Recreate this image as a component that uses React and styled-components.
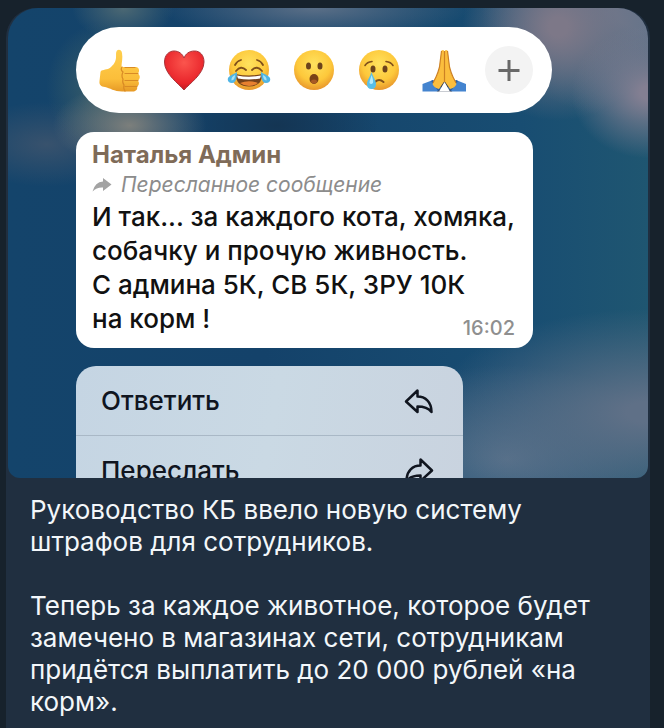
import React from 'react'
import styled, { createGlobalStyle } from 'styled-components'

function ThumbsUp () {
  return (
    <svg viewBox='0 0 48 48'>
      <defs>
        <linearGradient id='thumb' x1='0' y1='0' x2='0' y2='1'>
          <stop offset='0' stopColor='#ffcf4d' />
          <stop offset='0.7' stopColor='#fbbe3a' />
          <stop offset='1' stopColor='#e79a26' />
        </linearGradient>
      </defs>
      <path fill='url(#thumb)' d='M5.500 26C6 23.500 11 24 14 22.500C17 20.500 20.500 17 21 12C21.300 9 20.500 6 22 4.500C24 3 26.500 4 27 7C28 12 26.500 17 26.500 21H41C44.500 21 45 26.500 42.500 27.500C45.500 28.500 45.500 33.500 42.500 34.500C44.500 35.500 44.500 39.500 42 40.500C43 43 41 45.500 38 45.500H27C19 45.500 15 42 10 41C6 40.500 4 39 4.500 35Z' />
      <g fill='none' stroke='#d98b25' strokeWidth='1.200' strokeLinecap='round'>
        <path d='M27 21Q25 24 28 26Q26 30 28 33Q27 37 29 39Q28 43 30 45' />
        <path d='M30 27.500H43M30 34.500H43M30 40.500H42M30 21.500H40' />
      </g>
    </svg>
  )
}

function Heart () {
  return (
    <svg viewBox='0 0 48 48'>
      <defs>
        <radialGradient id='heart' cx='0.5' cy='0.3' r='0.75'>
          <stop offset='0' stopColor='#fb554d' />
          <stop offset='0.7' stopColor='#e9252b' />
          <stop offset='1' stopColor='#b3151d' />
        </radialGradient>
      </defs>
      <path fill='url(#heart)' stroke='#a8343a' strokeWidth='1' d='M24 44C19 38 4.500 28 4.500 16C4.500 9 9 5 14 5C19 5 22.500 8 24 12C25.500 8 29 5 34.500 5C40 5 44 9 44 16C44 28 29 38 24 44Z' />
    </svg>
  )
}

function Face ({ id, children }) {
  return (
    <svg viewBox='0 0 48 48'>
      <defs>
        <radialGradient id={id} cx='0.5' cy='0.35' r='0.65'>
          <stop offset='0' stopColor='#ffe25e' />
          <stop offset='0.65' stopColor='#fdc83b' />
          <stop offset='1' stopColor='#e8962c' />
        </radialGradient>
      </defs>
      <circle cx='24' cy='24' r='20' fill={`url(#${id})`} />
      {children}
    </svg>
  )
}

function Joy () {
  return (
    <Face id='joy'>
      <g fill='none' stroke='#80501b' strokeWidth='1.800' strokeLinecap='round'>
        <path d='M10 19Q12 15 16 14M32 14Q36 15 38 19' />
        <path d='M11 25Q16 19 21 24M27 24Q32 19 37 25' />
      </g>
      <path fill='#75421b' d='M10.500 28Q24 31 37.500 28Q37 40.500 24 40.500Q11 40.500 10.500 28Z' />
      <path fill='#fff' d='M12 29.500Q24 32 36 29.500L35 32.500Q24 34.500 13 32.500Z' />
      <path fill='#e8802f' d='M15 37Q24 33.500 33 37Q29 40 24 40Q19 40 15 37Z' />
      <path fill='#4fb5e6' d='M12 26C12 32 11 37 7 37C2 37 1.500 32 5 30C8 28 9 28 12 26ZM36 26C36 32 37 37 41 37C46 37 46.500 32 43 30C40 28 39 28 36 26Z' />
      <path fill='#a9e2f6' d='M10 29Q10 34 6.500 34.500Q6 31 10 29ZM38 29Q38 34 41.500 34.500Q42 31 38 29Z' />
    </Face>
  )
}

function Surprised () {
  return (
    <Face id='surprised'>
      <ellipse cx='18.500' cy='20' rx='2.500' ry='3.500' fill='#6c431c' />
      <ellipse cx='30' cy='20' rx='2.500' ry='3.500' fill='#6c431c' />
      <ellipse cx='24' cy='33' rx='4.500' ry='5' fill='#794217' />
      <ellipse cx='24' cy='35.500' rx='3' ry='2' fill='#a85a24' />
    </Face>
  )
}

function Crying () {
  return (
    <Face id='crying'>
      <g fill='none' stroke='#80501b' strokeWidth='1.600' strokeLinecap='round'>
        <path d='M10 19.500Q12 16 17 15.500M31 15.500Q36 16 38 19.500' />
        <path strokeWidth='2' d='M20 36Q24 32 28.500 36' />
      </g>
      <ellipse cx='18' cy='23' rx='2.500' ry='3.500' fill='#6c431c' />
      <ellipse cx='30' cy='23' rx='2.500' ry='3.500' fill='#6c431c' />
      <path fill='#59bfe9' d='M16.500 26C18 31 21 34 21 38Q21 43 16.500 43Q12 43 12 38C12 34 15 31 16.500 26Z' />
      <path fill='#b5eafb' d='M16.500 29C17.500 32 18.500 34 18 37Q16 39 14.500 37C14.500 34 16 32 16.500 29Z' />
    </Face>
  )
}

function Praying () {
  return (
    <svg viewBox='0 0 48 48'>
      <path fill='#28344c' d='M14 37L24 32L35 37L32 45.500H17Z' />
      <path fill='#4484cf' d='M2.500 38L13 34L21 42L17 45.500H2.500ZM46 38L36 34L28 42L32 45.500H46Z' />
      <path fill='#2b60a4' d='M11 35L13 34L21 42L18 45ZM38 35L36 34L28 42L31 45Z' />
      <path fill='#fbbe3d' d='M21.500 4.500Q24 3 24.500 6V35L19 43Q14 42 12.500 38L16 31Q18.500 27 19.500 20ZM27.500 4.500Q25 3 24.500 6V35L30 43Q35 42 36.500 38L33 31Q30.500 27 29.500 20Z' />
      <path fill='none' stroke='#cd8124' strokeWidth='1.200' d='M24.500 5V36M21.500 5L19.500 21Q18 27 16 31L13 37M27.500 5L29.500 21Q31 27 33 31L36 37' />
      <path fill='#fff' d='M24.500 36L19 45.500H30Z' />
    </svg>
  )
}

function PlusIcon () {
  return (
    <svg viewBox='0 0 48 48'>
      <path stroke='#696969' strokeWidth='3' d='M13.500 24.500H34.500M24 14V35' />
    </svg>
  )
}

function ArrowIcon ({ flipped }) {
  return (
    <ArrowSvg viewBox='0 0 32 28' $flipped={flipped}>
      <path d='M3 14.500L14.500 3.500V9.500C22 9.500 28.500 14.500 28.500 25C25 20.500 21 19.500 14.500 19.500V25Z' />
    </ArrowSvg>
  )
}

const reactions = [
  { label: 'Нравится', Icon: ThumbsUp },
  { label: 'Сердце', Icon: Heart },
  { label: 'Смех до слёз', Icon: Joy },
  { label: 'Удивление', Icon: Surprised },
  { label: 'Слёзы', Icon: Crying },
  { label: 'Спасибо', Icon: Praying }
]

function App () {
  return (
    <Page>
      <GlobalStyle />
      <Post>
        <Photo>
          <Reactions>
            {reactions.map(({ label, Icon }) => (
              <ReactionButton key={label} type='button' aria-label={label}>
                <Icon />
              </ReactionButton>
            ))}
            <ReactionButton type='button' aria-label='Другая реакция' $filled>
              <PlusIcon />
            </ReactionButton>
          </Reactions>

          <Bubble>
            <Sender>Наталья Админ</Sender>
            <Forwarded>
              <svg viewBox='0 0 20 16'>
                <path fill='#a3a3a3' d='M11 1L19.500 7.500L11 14V10.500Q5 10 0.500 14.500Q3 5 11 4.500Z' />
              </svg>
              Пересланное сообщение
            </Forwarded>
            <Message>
              {'И так... за каждого кота, хомяка,\nсобачку и прочую живность.\nС админа 5К, СВ 5К, ЗРУ 10К\nна корм !'}
              <Time>16:02</Time>
            </Message>
          </Bubble>

          <Menu>
            <MenuItem type='button'>
              Ответить
              <ArrowIcon />
            </MenuItem>
            <MenuItem type='button'>
              Переслать
              <ArrowIcon flipped />
            </MenuItem>
          </Menu>
        </Photo>

        <Caption>
          <p>Руководство КБ ввело новую систему штрафов для сотрудников.</p>
          <p>Теперь за каждое животное, которое будет замечено в магазинах сети, сотрудникам придётся выплатить до 20 000 рублей «на корм».</p>
        </Caption>
      </Post>
    </Page>
  )
}

export default App

const GlobalStyle = createGlobalStyle`
  * {
    box-sizing: border-box;
  }

  body {
    margin: 0;
    background: #17222c;
    font-family: Inter, 'Liberation Sans', sans-serif;
  }

  p {
    margin: 0;
  }

  button {
    border: none;
    font-family: inherit;
    cursor: pointer;
  }
`

const Page = styled.main`
  display: flex;
  min-height: 100vh;
  padding: 8px 14px 0 6px;
`

const Post = styled.article`
  flex: 1;
  min-width: 0;
  padding: 0 2px;
  background: #202f40;
  border-radius: 30px 30px 0 0;
`

const Photo = styled.div`
  display: flex;
  flex-direction: column;
  align-items: flex-start;
  aspect-ratio: 64 / 47;
  padding: 19px 68px 0;
  overflow: hidden;
  border-radius: 30px 30px 12px 12px;
  background:
    radial-gradient(ellipse 12% 14% at 100% 18%, #837f92 10%, transparent 100%),
    radial-gradient(ellipse 15% 20% at 86% 4%, #7d7888 10%, transparent 100%),
    radial-gradient(ellipse 26% 24% at 100% 0%, #64748a 20%, transparent 100%),
    radial-gradient(ellipse 24% 7% at 48% 0%, #5b6f87 0%, transparent 100%),
    radial-gradient(ellipse 8% 7% at 18% 0%, #4c6873 0%, transparent 100%),
    radial-gradient(ellipse 12% 9% at 19% 25%, #7c7f7c 0%, transparent 100%),
    radial-gradient(ellipse 9% 14% at 15% 17%, #3d6068 0%, transparent 100%),
    radial-gradient(ellipse 14% 9% at 6% 29%, #38526d 0%, transparent 100%),
    radial-gradient(ellipse 16% 10% at 42% 25%, #143553 0%, transparent 100%),
    radial-gradient(ellipse 34% 22% at 100% 86%, #5f7087 10%, transparent 100%),
    radial-gradient(ellipse 26% 20% at 78% 96%, #55708a 0%, transparent 100%),
    linear-gradient(90deg, #14446b 0%, #14426a 40%, #184d72 80%, #1f5671 100%);
`

const Reactions = styled.div`
  display: flex;
  gap: 17px;
  padding: 19px;
  background: #fff;
  border-radius: 43px;
`

const ReactionButton = styled.button`
  width: 48px;
  height: 48px;
  padding: 0;
  border-radius: 50%;
  background: ${props => props.$filled ? '#f3f3f3' : 'none'};

  svg {
    display: block;
  }
`

const Bubble = styled.div`
  margin: 19px 0 18px;
  padding: 8px 18px 10px 16px;
  background: #fff;
  border-radius: 18px;
`

const Sender = styled.div`
  color: #7f6b58;
  font-size: 24px;
  font-weight: 700;
  line-height: 30px;
`

const Forwarded = styled.div`
  display: flex;
  align-items: center;
  gap: 9px;
  color: #8c8c8c;
  font-size: 21px;
  font-style: italic;
  line-height: 30px;

  svg {
    width: 20px;
  }
`

const Message = styled.p`
  display: flow-root;
  color: #111;
  font-size: 26px;
  font-weight: 500;
  line-height: 34px;
  white-space: pre-line;
`

const Time = styled.time`
  float: right;
  margin-top: 16px;
  color: #8f8f8f;
  font-size: 20px;
  font-weight: 500;
  line-height: 20px;
`

const Menu = styled.div`
  width: 387px;
  max-width: 100%;
  flex-shrink: 0;
  overflow: hidden;
  background: linear-gradient(100deg, #c5d5e3, #cad9e4 50%, #c9d3df);
  border-radius: 20px 20px 0 0;
`

const MenuItem = styled.button`
  display: flex;
  align-items: center;
  justify-content: space-between;
  width: 100%;
  height: 69px;
  padding: 0 28px 0 25px;
  background: none;
  color: #10151f;
  font-size: 26px;
  font-weight: 500;

  & + & {
    border-top: 1px solid #a9b8c6;
  }
`

const ArrowSvg = styled.svg`
  width: 32px;
  height: 28px;
  transform: ${props => props.$flipped ? 'scaleX(-1)' : 'none'};

  path {
    fill: none;
    stroke: #10151f;
    stroke-width: 2.5px;
    stroke-linejoin: round;
  }
`

const Caption = styled.div`
  display: grid;
  gap: 32px;
  padding: 16px 22px;
  color: #f3f7fa;
  font-size: 26px;
  line-height: 32px;
`
